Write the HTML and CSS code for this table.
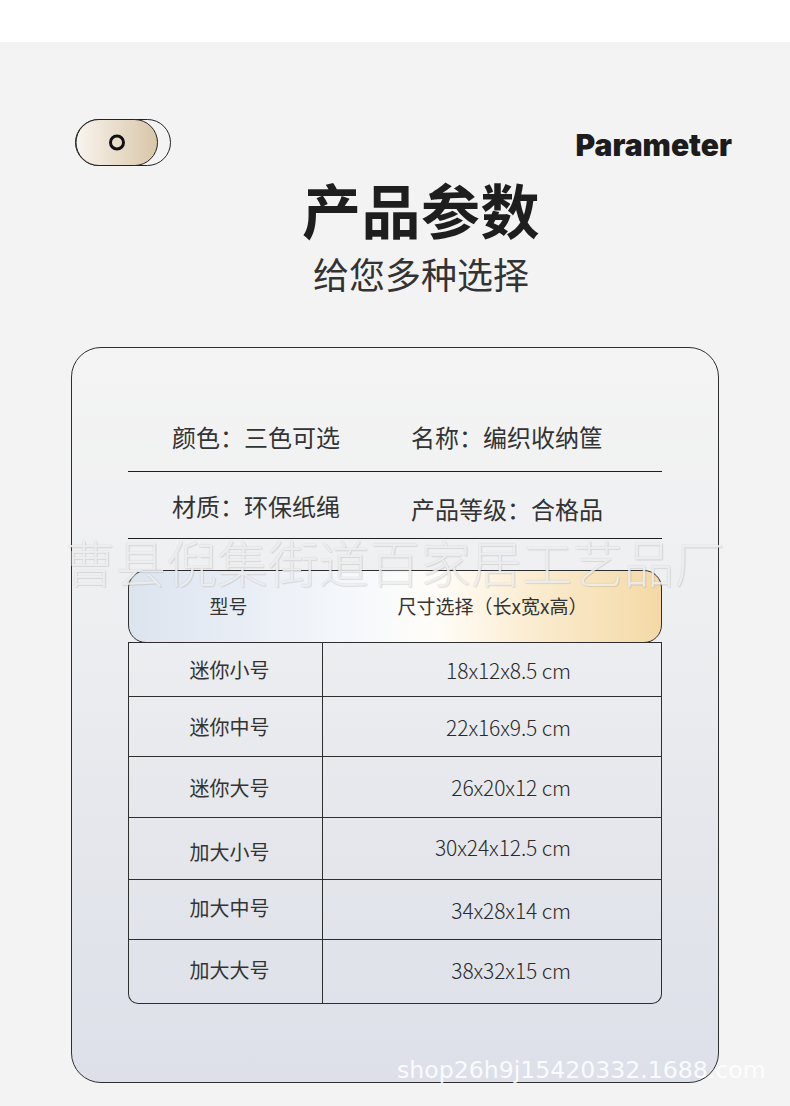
FILE: index.html
```html
<!DOCTYPE html>
<html lang="zh">
<head>
<meta charset="utf-8">
<title>产品参数</title>
<link rel="stylesheet" href="styles.css">
</head>
<body>
<div class="page">
  <div class="topbar"></div>
  <div class="head-row">
    <svg class="pill" width="96" height="48" viewBox="0 0 96 48">
      <defs>
        <linearGradient id="pg" x1="0" y1="0" x2="1" y2="0">
          <stop offset="0" stop-color="#f8f4ee"/>
          <stop offset="1" stop-color="#d9c6a8"/>
        </linearGradient>
      </defs>
      <rect x="0.5" y="0.5" width="95" height="46" rx="23" fill="none" stroke="#222" stroke-width="1"/>
      <rect x="1" y="0.5" width="81.5" height="46" rx="23" fill="url(#pg)" stroke="#222" stroke-width="1"/>
      <circle cx="42" cy="23.5" r="6.5" fill="none" stroke="#111" stroke-width="3"/>
    </svg>
    <div class="param">Parameter</div>
  </div>
  <div class="hero">
    <h1 class="title">产品参数</h1>
    <p class="subtitle">给您多种选择</p>
  </div>

  <div class="card">
    <div class="info-row">
      <span class="info-a">颜色：三色可选</span>
      <span class="info-b">名称：编织收纳筐</span>
    </div>
    <div class="info-row info-row2">
      <span class="info-a">材质：环保纸绳</span>
      <span class="info-b">产品等级：合格品</span>
    </div>

    <div class="table">
      <div class="thead">
        <div class="th">型号</div>
        <div class="th">尺寸选择（长x宽x高）</div>
      </div>
      <div class="tbody">
        <div class="tr r1"><div class="td name">迷你小号</div><div class="td size">18x12x8.5 cm</div></div>
        <div class="tr r2"><div class="td name">迷你中号</div><div class="td size">22x16x9.5 cm</div></div>
        <div class="tr r3"><div class="td name">迷你大号</div><div class="td size">26x20x12 cm</div></div>
        <div class="tr r4"><div class="td name">加大小号</div><div class="td size up">30x24x12.5 cm</div></div>
        <div class="tr r5"><div class="td name up">加大中号</div><div class="td size">34x28x14 cm</div></div>
        <div class="tr r6"><div class="td name up">加大大号</div><div class="td size up">38x32x15 cm</div></div>
      </div>
    </div>
  </div>

  <div class="wm-cn">曹县倪集街道百家居工艺品厂</div>
  <div class="wm-url">shop26h9j15420332.1688.com</div>
</div>
</body>
</html>
```
FILE: styles.css
```css
* { box-sizing: border-box; }
html, body {
  margin: 0;
  padding: 0;
  background: #f3f3f3;
}
body {
  font-family: "Noto Sans CJK SC", "Noto Sans", sans-serif;
  color: #2b2b2b;
}
.page {
  position: relative;
  width: 790px;
  height: 1106px;
  overflow: hidden;
  background: #f3f3f3;
}
.topbar {
  height: 42px;
  background: #ffffff;
}
.head-row {
  margin-top: 77px;
  height: 48px;
  display: flex;
  align-items: center;
  justify-content: space-between;
  padding: 0 58px 0 75px;
}
.pill { display: block; }
.param {
  font-family: Inter, "Liberation Sans", sans-serif;
  font-weight: 900;
  font-size: 30px;
  letter-spacing: 0;
  color: #1c1c1c;
  margin-top: 4px;
}
.hero {
  text-align: center;
  padding-left: 52px;
}
.title {
  margin: 12px 0 0;
  font-size: 59px;
  line-height: 1;
  font-weight: 700;
  color: #1e1e1e;
  letter-spacing: 0.5px;
}
.subtitle {
  margin: 17px 0 0;
  font-size: 36px;
  line-height: 1;
  font-weight: 400;
  color: #333;
}
.card {
  margin: 56px 71px 0;
  height: 736px;
  border: 1px solid #2e2e2e;
  border-radius: 30px;
  background: linear-gradient(180deg, #f4f4f4 0%, #eeeff1 35%, #e5e7ec 65%, #dde0e9 100%);
  padding: 56px 56px 0;
}
.info-row {
  height: 68px;
  display: grid;
  grid-template-columns: 239px 1fr;
  align-items: center;
  padding-left: 44px;
  border-bottom: 1px solid #1f1f1f;
  font-size: 24px;
  color: #333;
  padding-bottom: 2px;
}
.info-row2 {
  height: 67px;
  padding-bottom: 0;
}
.info-row2 .info-b { margin-top: 6px; }
.table {
  margin-top: 31px;
}
.thead {
  height: 73px;
  display: grid;
  grid-template-columns: 195px 1fr;
  align-items: center;
  border: 1px solid #2e2e2e;
  border-radius: 18px;
  background: linear-gradient(90deg, #dce4ee 0%, #e9eef6 22%, #f7f9fc 45%, #fffdf8 58%, #fbedd2 75%, #f4d9a6 100%);
  font-size: 19px;
  color: #333;
  text-align: center;
  padding-bottom: 2px;
}
.thead .th:first-child { padding-left: 4px; }
.tbody {
  margin-top: -1px;
  border: 1px solid #2e2e2e;
  border-top: none;
  border-radius: 0 0 10px 10px;
}
.tr {
  display: grid;
  grid-template-columns: 194px 1fr;
  border-top: 1px solid #2e2e2e;
}
.r1 { height: 54px; }
.r2 { height: 60px; }
.r3 { height: 61px; }
.r4 { height: 62px; }
.r5 { height: 60px; }
.r6 { height: 64px; }
.td {
  display: flex;
  align-items: center;
  color: #333;
}
.name {
  justify-content: center;
  border-right: 1px solid #2e2e2e;
  font-size: 20px;
  padding-left: 8px;
}
.size {
  justify-content: flex-end;
  padding-right: 90px;
  font-size: 21px;
  font-weight: 300;
  letter-spacing: -0.1px;
  color: #2a2a2a;
}
.name.up, .size.up { padding-bottom: 4px; }
.r4 .name { padding-top: 6px; }
.wm-cn {
  position: absolute;
  left: 0;
  right: 0;
  top: 531px;
  text-align: center;
  font-size: 50.5px;
  line-height: 60px;
  font-weight: 300;
  letter-spacing: 0.3px;
  color: rgba(255, 255, 255, 0.75);
  text-shadow: 0 0 1px rgba(120, 120, 120, 0.45), 1px 1px 1px rgba(0, 0, 0, 0.08);
  pointer-events: none;
}
.wm-url {
  position: absolute;
  left: 397px;
  top: 1055px;
  font-family: "DejaVu Sans", sans-serif;
  font-size: 23.6px;
  line-height: 30px;
  color: rgba(255, 255, 255, 0.88);
  letter-spacing: 0;
  pointer-events: none;
}
```
